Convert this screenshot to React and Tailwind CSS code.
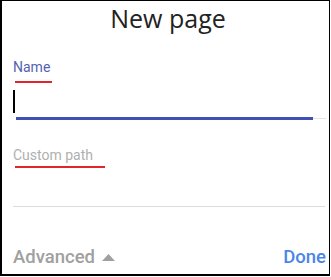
import React from "react";

const NewPageDialog = () => {
  return (
    <div className="w-[331px] h-[277px] bg-white" style={{ fontFamily: "Roboto, 'Liberation Sans', sans-serif" }}>
      <div className="w-[330px] h-[276px] border-t border-r border-b-2 border-l-2 border-black flex flex-col">
        <h1
          className="mt-[1px] pl-[5px] text-center text-[25px] leading-[32px] text-[#222]"
          style={{ fontFamily: "'Open Sans', Roboto, sans-serif" }}
        >
          New page
        </h1>

        <div className="pl-[11px] mt-[24px]">
          <div className="text-[14px] leading-[18px] text-[#5363b3]">Name</div>
          <div className="ml-[2px] mt-[5px] w-[37px] h-[2px] bg-[#e0262b]" />
          <div className="mt-[7px] flex items-stretch">
            <div className="w-[2px] h-[23px] bg-black" />
          </div>
          <div className="mt-[4px] ml-[3px] flex items-center">
            <div className="w-[297px] h-[3px] bg-[#3f51b5]" />
            <div className="w-[13px] h-px bg-[#e6e6e6]" />
          </div>
        </div>

        <div className="pl-[11px] mt-[26px]">
          <div className="text-[14px] leading-[18px] text-[#b0b0b0]">Custom path</div>
          <div className="ml-[2px] mt-[2px] w-[90px] h-[2px] bg-[#e0262b]" />
          <div className="mt-[38px] w-[312px] h-px bg-[#dcdcdc]" />
        </div>

        <div className="mt-auto mb-[5px] pl-[11px] pr-[3px] flex items-center justify-between">
          <div className="flex items-center gap-[7px]">
            <span className="text-[18.5px] leading-[24px] font-medium text-[#a0a0a0]">Advanced</span>
            <svg width="13" height="7" viewBox="0 0 13 7" className="mt-[1px]">
              <path d="M0 7 L6.5 0 L13 7 Z" fill="#a0a0a0" />
            </svg>
          </div>
          <span className="text-[18.5px] leading-[24px] font-medium text-[#4a86e8]">Done</span>
        </div>
      </div>
    </div>
  );
};

export default function App() {
  return <NewPageDialog />;
}
